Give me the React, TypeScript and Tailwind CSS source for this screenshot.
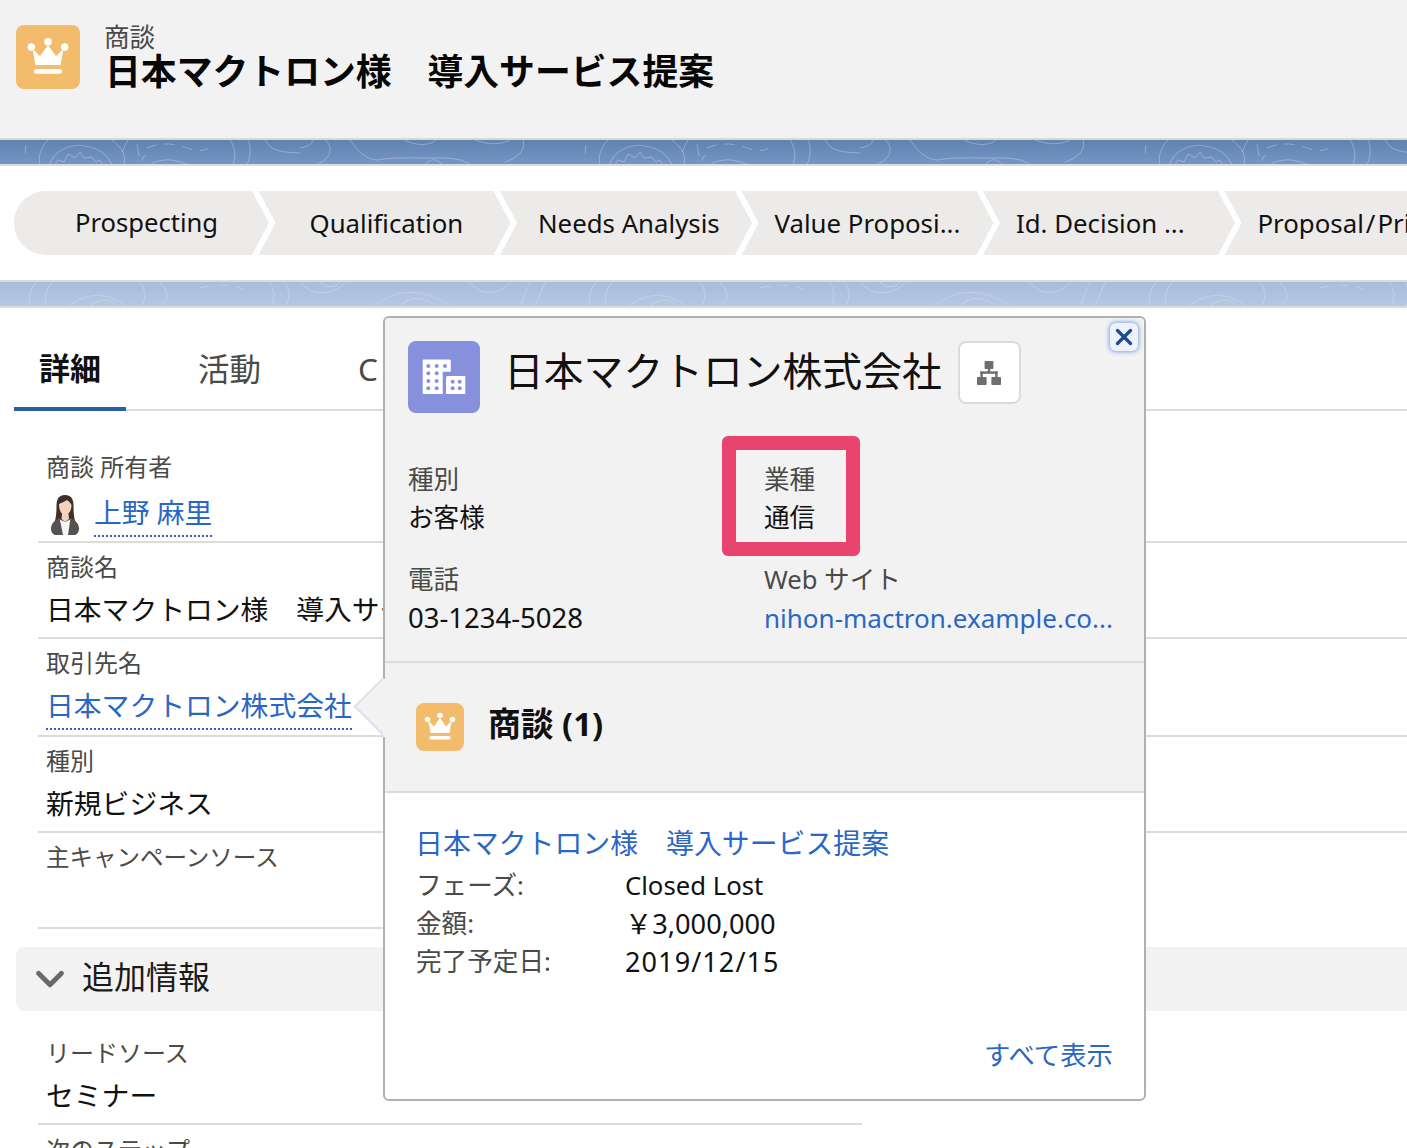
import { X, ChevronDown } from 'lucide-react';

function Crown() {
  return (
    <svg viewBox="0 0 48 48" className="w-full h-full" fill="#fff">
      <circle cx="11.5" cy="16.5" r="2.8" />
      <circle cx="24" cy="12.5" r="2.8" />
      <circle cx="36.5" cy="16.5" r="2.8" />
      <path d="M12.5 18 L18 23.5 L24 15 L30 23.5 L35.5 18 L33.5 30 L14.5 30 Z" />
      <rect x="13.5" y="33" width="21" height="3.6" rx="1.6" />
    </svg>
  );
}

function Building() {
  const big = [
    [20.3, 25], [28.7, 25], [37, 25],
    [20.3, 32.3], [28.7, 32.3],
    [20.3, 40], [28.7, 40],
    [20.3, 47.3], [28.7, 47.3],
  ];
  const small = [[44.7, 40.7], [51.7, 40.7], [44.7, 47.3], [51.7, 47.3]];
  return (
    <svg viewBox="0 0 72 72" className="w-full h-full">
      <path d="M15.5 18.5 H41.5 Q42.8 18.5 42.8 20 V30.7 H34.7 V53 H15.5 Q14.7 53 14.7 52 V19.5 Q14.7 18.5 15.5 18.5 Z" fill="#fff" />
      <path d="M39.5 35 H57.3 V53 H38 V36.5 Q38 35 39.5 35 Z" fill="#fff" />
      {big.map(([x, y], i) => (
        <circle key={i} cx={x} cy={y} r="2" fill="#8690dd" />
      ))}
      {small.map(([x, y], i) => (
        <circle key={i} cx={x} cy={y} r="2" fill="#8690dd" />
      ))}
    </svg>
  );
}

function Hierarchy() {
  return (
    <svg viewBox="0 0 24 24" className="w-[24px] h-[24px]" fill="#706e6b">
      <rect x="7.6" y="0" width="8.8" height="8" rx="0.8" />
      <rect x="10.8" y="7" width="2.4" height="5" />
      <rect x="3.4" y="10.4" width="17.2" height="2.4" />
      <rect x="3.4" y="10.4" width="2.4" height="6.5" />
      <rect x="18.2" y="10.4" width="2.4" height="6.5" />
      <rect x="0" y="16" width="9.6" height="8" rx="0.8" />
      <rect x="14.4" y="16" width="9.6" height="8" rx="0.8" />
    </svg>
  );
}

function Avatar() {
  return (
    <svg viewBox="0 0 30 40" className="w-[30px] h-[40px]">
      <path d="M15 0 C8 0 6.5 5 6.5 11 C6.5 18 6 23 4.5 27 L25.5 27 C24 23 23.5 18 23.5 11 C23.5 5 22 0 15 0 Z" fill="#3d2f2a" />
      <path d="M9 9 C12 8 15 6 17 5 C19 7 21 8 21.5 10 C21.5 16 18.5 20 15.2 20 C12 20 9 16 9 9 Z" fill="#f3d3bd" />
      <path d="M12 19 L18.5 19 L19 24 L15 27 L11.5 24 Z" fill="#f3d3bd" />
      <path d="M9 24 L15 27 L21 24 L24 27 L22 40 L8 40 L6 27 Z" fill="#f6f6f6" />
      <path d="M9.5 23 C5 25 1.5 28 1 33 C0.8 36 2 39 5 40 L13 40 L11 30 Z" fill="#55524f" />
      <path d="M20.5 23 C25 25 28.5 28 29 33 C29.2 36 28 39 25 40 L18 40 L19.5 30 Z" fill="#55524f" />
    </svg>
  );
}

// contour lines behind the header strip
function Band({ id, className, stroke, paths }: { id: string; className: string; stroke: string; paths: string[] }) {
  return (
    <div className={`h-[26px] border-b-2 border-[#dcdcdc] ${className}`}>
      <svg className="w-full h-[24px] block">
        <defs>
          <pattern id={id} width="560" height="24" patternUnits="userSpaceOnUse">
            {paths.map((d, i) => (
              <path key={i} d={d} fill="none" stroke={stroke} strokeWidth="1" strokeDasharray={i === 0 ? '10 8' : undefined} />
            ))}
          </pattern>
        </defs>
        <rect width="100%" height="100%" fill={`url(#${id})`} />
      </svg>
    </div>
  );
}

const topPaths = [
  'M147 8 C160 2 175 3 190 9 C200 11 205 11 208 8',
  'M26 5 L25 13',
  'M48 0 C40 8 38 18 40 25',
  'M50 25 C52 12 70 3 85 6 C100 8 108 16 112 25',
  'M55 25 L58 20 L64 22 L68 14 L75 18 L80 12 L84 18 L92 17 L96 22 L100 20 L103 25',
  'M112 0 C122 8 126 14 124 25',
  'M128 0 L122 12',
  'M137 4 L139 16',
  'M145 15 L141 21',
  'M150 25 C155 20 170 18 180 22 L190 25',
  'M230 0 C236 8 236 20 232 25',
  'M248 0 C252 8 250 18 247 25',
  'M265 0 C272 12 282 12 300 13',
  'M300 8 C312 6 313 2 312 0',
  'M325 0 C335 8 330 20 315 25',
  'M350 0 C360 15 370 20 378 20 C390 17 420 18 440 18 C455 18 465 20 470 25',
  'M425 25 C430 18 438 18 442 25',
  'M405 0 C415 6 430 6 436 0',
  'M475 0 C490 5 500 5 510 0',
  'M523 0 C525 8 522 16 505 22',
];

const lowPaths = [
  'M200 6 C215 2 230 2 245 8',
  'M36 0 C30 8 28 16 30 24',
  'M52 0 C46 8 44 16 46 24',
  'M70 24 C85 10 110 10 125 24',
  'M90 24 C100 16 110 16 118 24',
  'M140 0 C146 8 146 16 142 24',
  'M160 0 C170 12 168 18 162 24',
  'M270 0 C275 10 275 16 272 24',
  'M285 0 C290 10 290 16 286 24',
  'M300 0 C310 14 335 14 345 0',
  'M320 0 C325 6 335 6 340 0',
  'M375 24 C395 6 425 6 450 24',
  'M400 24 C410 14 425 14 435 24',
  'M470 0 C480 14 500 14 510 0',
  'M520 24 L530 0',
  'M535 24 L545 0',
];

const steps = [
  { label: 'Qualification', pad: 'pl-[51px]' },
  { label: 'Needs Analysis', pad: 'pl-[38px]' },
  { label: 'Value Proposi...', pad: 'pl-[33px]' },
  { label: 'Id. Decision ...', pad: 'pl-[33px]' },
];

const chevron =
  'w-[252px] h-16 shrink-0 -ml-[10.5px] bg-[#ecebea] flex items-center whitespace-nowrap text-[25.8px] text-[#111] pt-[1px] [clip-path:polygon(0_0,235px_0,252px_50%,235px_100%,0_100%,17px_50%)]';

const rowLine = 'border-b-2 border-[#dddbda]';
const labelText = 'text-[24px] leading-[30px] text-[#4a4a48]';
const popLabel = 'text-[25.6px] leading-[38px] text-[#4a4a48]';
const valueText = 'text-[27.8px] leading-[38px] text-[#111]';
const linkText = 'text-[27.8px] leading-[38px] text-[#2a67c5]';

export default function App() {
  return (
    <div className="relative h-[1148px] overflow-hidden bg-white font-['Noto_Sans','Noto_Sans_CJK_JP',sans-serif]">
      {/* Page header */}
      <div className="h-[140px] bg-[#f3f2f2] border-b-2 border-[#d8d8d8] pl-4 pt-[25px] flex items-start gap-[24px]">
        <div className="w-16 h-16 rounded-lg bg-[#f2bc6c]">
          <Crown />
        </div>
        <div>
          <p className="text-[25.6px] leading-[26px] text-[#4a4a48]">商談</p>
          <h1 className="ml-px mt-px text-[35.85px] leading-[40px] font-bold text-[#080707] whitespace-pre">日本マクトロン様　導入サービス提案</h1>
        </div>
      </div>
      <Band id="band-top" className="bg-gradient-to-b from-[#5f83b2] to-[#7595c2]" stroke="rgba(255,255,255,0.28)" paths={topPaths} />

      {/* Path */}
      <div className={`h-[116px] pt-[25px] overflow-hidden ${rowLine}`}>
        <div className="flex pl-[14px] w-[1500px]">
          <div className="w-[255px] h-16 shrink-0 rounded-l-[32px] bg-[#ecebea] flex items-center justify-center text-[25.6px] text-[#111] pl-[10px] pt-[1px] [clip-path:polygon(0_0,238px_0,255px_50%,238px_100%,0_100%)]">
            Prospecting
          </div>
          {steps.map((s) => (
            <div key={s.label} className={`${chevron} ${s.pad}`}>
              {s.label}
            </div>
          ))}
          <div className={`${chevron} pl-[33px]`}>
            Proposal<span className="mx-[2px]">/</span>Price...
          </div>
        </div>
      </div>
      <Band id="band-low" className="bg-gradient-to-b from-[#a8bddc] to-[#b6c7e1]" stroke="rgba(255,255,255,0.22)" paths={lowPaths} />

      {/* Tabs */}
      <div className="h-[103px] ml-[14px] border-b-2 border-[#dddbda] flex">
        <div className="w-[112px] h-[103px] border-b-4 border-[#2a5ea7] flex items-center justify-center pt-[22px] text-[31px] font-bold text-[#111]">詳細</div>
        <div className="ml-[72px] h-[101px] flex items-center pt-[20px] text-[31.5px] text-[#4a4a48]">活動</div>
        <div className="ml-[97px] h-[101px] flex items-center pt-[20px] text-[31.5px] tracking-[6px] text-[#4a4a48]">Chatter</div>
      </div>

      {/* Fields */}
      <div className="ml-[38px]">
        <div className={`h-[132px] pt-[41px] pl-2 ${rowLine}`}>
          <p className={labelText}>商談 所有者</p>
          <div className="mt-[11px] flex items-start gap-[14px] pl-1">
            <div className="mt-[2px]">
              <Avatar />
            </div>
            <span className={`${linkText} border-b-2 border-dotted border-[#2a67c5] pb-[4px]`}>上野 麻里</span>
          </div>
        </div>
        <div className={`h-[96px] pt-[9px] pl-2 ${rowLine}`}>
          <p className={labelText}>商談名</p>
          <p className={`mt-2 whitespace-pre ${valueText}`}>日本マクトロン様　導入サービス提案</p>
        </div>
        <div className={`h-[98px] pt-[9px] pl-2 ${rowLine}`}>
          <p className={labelText}>取引先名</p>
          <p className="mt-2">
            <span className={`inline-block ${linkText} border-b-2 border-dotted border-[#2a67c5] pb-[4px]`}>日本マクトロン株式会社</span>
          </p>
        </div>
        <div className={`h-[96px] pt-[9px] pl-2 ${rowLine}`}>
          <p className={labelText}>種別</p>
          <p className={`mt-2 ${valueText}`}>新規ビジネス</p>
        </div>
        <div className={`h-[96px] w-[824px] pt-[9px] pl-2 ${rowLine}`}>
          <p className="text-[23.5px] leading-[30px] text-[#4a4a48]">主キャンペーンソース</p>
        </div>
      </div>

      <div className="mt-[18px] ml-4 h-16 rounded-l-lg bg-[#f3f2f2] flex items-center pl-[11px] gap-[9px]">
        <ChevronDown className="w-[46px] h-[46px] text-[#6b6966]" strokeWidth={2.5} />
        <span className="text-[32px] text-[#1a1a1a] pb-1">追加情報</span>
      </div>

      <div className="ml-[38px] w-[824px]">
        <div className={`h-[114px] pt-[27px] pl-2 ${rowLine}`}>
          <p className={labelText}>リードソース</p>
          <p className={`mt-2 ${valueText}`}>セミナー</p>
        </div>
        <p className={`pt-[10px] pl-2 ${labelText}`}>次のステップ</p>
      </div>

      {/* Account popover */}
      <div className="absolute left-[383px] top-[316px] w-[763px] h-[785px] rounded-[6px] border-2 border-[#b0b0b0] bg-white">
        <div className={`h-[345px] rounded-t-[4px] bg-[#f3f2f2] ${rowLine}`}>
          <div className="pl-[23px] pt-[23px] flex items-start">
            <div className="w-[72px] h-[72px] rounded-lg bg-[#8690dd]">
              <Building />
            </div>
            <h2 className="ml-[24px] text-[39.8px] leading-[60px] text-[#111]">日本マクトロン株式会社</h2>
            <div className="ml-[16px] w-[63px] h-[63px] rounded-lg border-2 border-[#dddbda] bg-white flex items-center justify-center">
              <Hierarchy />
            </div>
          </div>
          <div className="mt-[48px] pl-[23px] grid grid-cols-[356px_1fr] gap-y-[24px]">
            <div>
              <p className={popLabel}>種別</p>
              <p className="text-[25.6px] leading-[38px] text-[#111]">お客様</p>
            </div>
            <div>
              <p className={popLabel}>業種</p>
              <p className="text-[25.6px] leading-[38px] text-[#111]">通信</p>
            </div>
            <div>
              <p className={popLabel}>電話</p>
              <p className="text-[27.5px] leading-[38px] text-[#111]">03-1234-5028</p>
            </div>
            <div>
              <p className={popLabel}>Web サイト</p>
              <p className="text-[26px] leading-[38px] text-[#2a67c5]">nihon-mactron.example.co...</p>
            </div>
          </div>
        </div>

        <div className={`h-[130px] bg-[#f3f2f2] pl-[31px] flex items-center gap-[24px] ${rowLine}`}>
          <div className="w-12 h-12 rounded-lg bg-[#f2bc6c]">
            <Crown />
          </div>
          <span className="text-[32.8px] font-bold text-[#111] pb-[6px]">商談 (1)</span>
        </div>

        <div className="pl-[31px] pr-[31px] pt-[31px]">
          <p className={`-ml-px whitespace-pre text-[27.9px] leading-[38px] text-[#2a67c5]`}>日本マクトロン様　導入サービス提案</p>
          <div className="mt-[5px] grid grid-cols-[209px_1fr]">
            <span className={popLabel}>フェーズ:</span>
            <span className="text-[25.7px] leading-[38px] text-[#111]">Closed Lost</span>
            <span className={popLabel}>金額:</span>
            <span className="text-[27.2px] leading-[38px] text-[#111]">￥3,000,000</span>
            <span className={popLabel}>完了予定日:</span>
            <span className="text-[27px] leading-[38px] tracking-[1.1px] text-[#111]">2019/12/15</span>
          </div>
          <p className="mt-[55px] text-right text-[26.4px] leading-[38px] text-[#2a67c5]">すべて表示</p>
        </div>

        {/* Pointer towards the account link */}
        <div className="absolute -left-[23.5px] top-[368px] w-[41px] h-[41px] rotate-45 bg-[#f3f2f2] border-l-2 border-b-2 border-[#dfe1ef]" />
        <div className="absolute -left-[2px] top-[361px] w-[4px] h-[58px] bg-[#f3f2f2]" />

        {/* Highlight around 業種 */}
        <div className="absolute left-[337px] top-[118px] w-[138px] h-[120px] rounded-md border-[14px] border-[#e8446f]" />

        <button className="absolute right-[6px] top-[5px] w-[28px] h-[28px] rounded-[6px] bg-[#eef2fa] shadow-[0_0_4px_1px_#7ea4e0] flex items-center justify-center">
          <X className="w-[26px] h-[26px] text-[#1f4a8e]" strokeWidth={3} />
        </button>
      </div>
    </div>
  );
}
